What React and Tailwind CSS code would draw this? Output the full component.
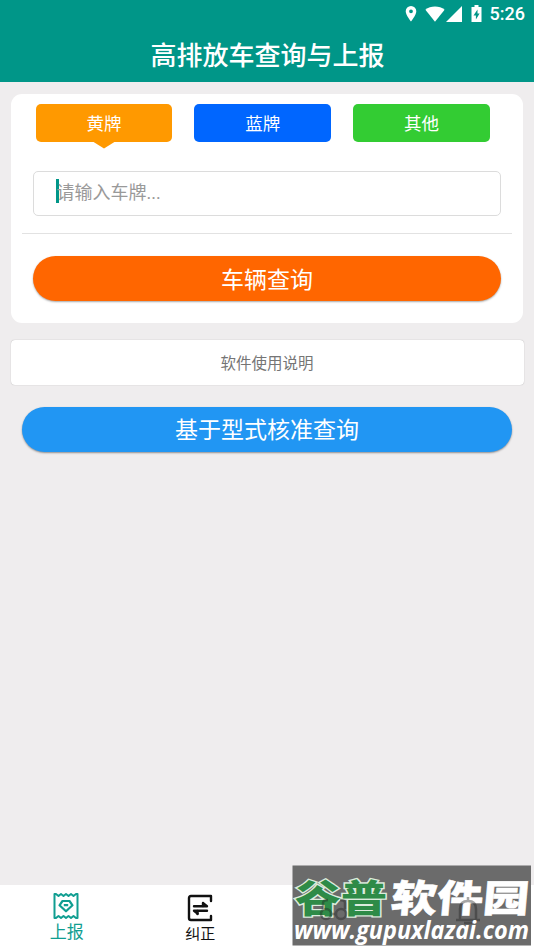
const CJK = "font-['Roboto','Noto_Sans_CJK_SC',sans-serif]";

function StatusBar() {
  return (
    <div className="h-[27px] flex items-center justify-end pr-[9px] text-white">
      <svg width="12" height="17" viewBox="0 0 12 17" fill="currentColor" className="mr-2">
        <path fillRule="evenodd" d="M6 1a5.3 5.3 0 0 0-5.3 5.3C.7 10.300 6 16.500 6 16.500s5.300-6.200 5.300-10.200A5.300 5.300 0 0 0 6 1zm0 3.400a1.900 1.900 0 1 1 0 3.800 1.900 1.900 0 0 1 0-3.800z" />
      </svg>
      <svg width="20" height="16" viewBox="0 0 20 16" fill="currentColor" className="mr-px">
        <path d="M10 15.800.400 3.700C3 1.700 6.300.500 10 .500s7 1.200 9.600 3.200z" />
      </svg>
      <svg width="16" height="16" viewBox="0 0 16 16" fill="currentColor" className="mr-[9px]">
        <path d="M0 16 16 0v16z" />
      </svg>
      <svg width="11" height="17" viewBox="0 0 11 17" fill="currentColor" className="mr-[8px]">
        <path fillRule="evenodd" d="M3.500 0h4v2H10.500v15H.500V2h3zM6.500 4.500 2.500 10.500h2.400v4l3.700-6H6.500z" />
      </svg>
      <span className="text-[18px] leading-[27px] font-medium">5:26</span>
    </div>
  );
}

function Tab({ label, color, active }) {
  return (
    <div className={`relative flex-1 h-[38px] rounded-[5px] text-white text-[17.5px] flex items-center justify-center pt-[2px] ${color}`}>
      {label}
      {active && (
        <svg className="absolute top-[37px] left-[56px]" width="24" height="8" viewBox="0 0 24 8">
          <path d="M0 0h24L12 7.500z" fill="#ff9900" />
        </svg>
      )}
    </div>
  );
}

function NavItem({ label, className, children }) {
  return (
    <div className={`flex-1 flex flex-col items-center ${className}`}>
      {children}
      {label}
    </div>
  );
}

function ReportIcon() {
  return (
    <svg width="26" height="28" viewBox="0 0 26 28" fill="none" stroke="currentColor" strokeWidth="2" strokeLinejoin="round" className="-ml-px">
      <path d="M1.500 2h1.500l2.500 2 2.500-2 2.500 2L13 2l2.500 2 2.500-2 2.500 2 2.500-2h1.500v24h-1.500l-2.500-2-2.500 2-2.500-2-2.500 2-2.500-2-2.500 2-2.500-2-2.500 2h-1.500z" />
      <path strokeWidth="2.200" d="M9.500 9h7l3 4.300-6.500 6-6.500-6zM10.800 13.200h4.400" />
    </svg>
  );
}

function CorrectIcon() {
  return (
    <svg width="26" height="28" viewBox="0 0 26 28" fill="none" stroke="currentColor" strokeWidth="2.400" strokeLinecap="round" strokeLinejoin="round">
      <path d="M24 7V2H4Q2 2 2 4v20q0 2 2 2h20v-4" />
      <path d="M7 12.200h13L16.500 9.500M20 16.800H7l3.500 2.700" />
      <path d="M16 9v3M10.500 17v3" />
    </svg>
  );
}

function Watermark() {
  return (
    <svg className="absolute left-[292px] top-[865px]" width="240" height="81" viewBox="0 0 240 81">
      <rect x="0.500" y="0.500" width="238.500" height="80" fill="#6b6b6b" />
      <g className="font-['Noto_Sans_CJK_SC',sans-serif] font-black" fontSize="42">
        <text transform="translate(3 46.500) scale(1 0.9)" textLength="92" lengthAdjust="spacingAndGlyphs" fill="#2e8b47" stroke="#dcebdd" strokeWidth="3" paintOrder="stroke">谷普</text>
        <text transform="translate(98 46.500) skewX(-5) scale(1 0.9)" textLength="138" lengthAdjust="spacingAndGlyphs" fill="#ffffff" stroke="#ffffff" strokeWidth="0.600">软件园</text>
      </g>
      <g fill="none" stroke="#222222" strokeWidth="2.500" opacity="0.400">
        <circle cx="34" cy="49" r="5" />
        <circle cx="49" cy="49" r="5" />
        <path d="M31 44v-6q0-3 5-3M53 44v-6q0-3-5-3M39 49h5" />
        <path d="M164 55h24M168 54V44q0-8 8-8t8 8v10M176 36v-4M172 58h8" />
      </g>
      <text x="2" y="74" textLength="235" lengthAdjust="spacingAndGlyphs" fill="#ffffff" className="font-['Open_Sans',sans-serif] font-bold italic" fontSize="25">www.gupuxlazai.com</text>
    </svg>
  );
}

export default function App() {
  return (
    <div className={`relative w-[534px] h-[950px] overflow-hidden bg-[#efedee] flex flex-col ${CJK}`}>
      <header className="h-[82px] shrink-0 bg-[#009688] text-white">
        <StatusBar />
        <h1 className="h-[55px] flex items-center justify-center pt-[3px] pl-px text-[26px] font-medium">高排放车查询与上报</h1>
      </header>

      <main className="flex-1">
        <section className="mx-[11px] mt-3 h-[229px] rounded-[11px] bg-white pt-[10px]">
          <div className="flex gap-[22px] ml-[24.500px] mr-[33px]">
            <Tab label="黄牌" color="bg-[#ff9900]" active />
            <Tab label="蓝牌" color="bg-[#0066ff]" />
            <Tab label="其他" color="bg-[#33cc33]" />
          </div>
          <div className="mx-[22px] mt-[29px] h-[45px] rounded-[5px] border border-[#dcdcdc] flex items-start pl-[22px] pt-[7px]">
            <span className="w-[2.500px] h-6 bg-[#009688]" />
            <span className="-ml-[2px] pt-[2px] text-[18px] leading-6 text-[#999999]">请输入车牌...</span>
          </div>
          <div className="mx-[11px] mt-[17px] h-px bg-[#e2e2e2]" />
          <button className="block w-[468px] h-[45px] mx-[22px] mt-[22px] pt-[5px] rounded-full bg-[#ff6600] text-white text-[23px] shadow-[0_1px_2px_rgba(0,0,0,0.35)]">车辆查询</button>
        </section>

        <button className="block w-[513px] h-[45px] ml-[10.500px] mt-[17px] pt-[4px] rounded-[4px] bg-white text-[#757575] text-[15.500px] shadow-[0_0_1px_rgba(0,0,0,0.35)]">软件使用说明</button>
        <button className="block w-[490px] h-[45px] ml-[22px] mt-[21.500px] pt-[5px] rounded-full bg-[#2196f3] text-white text-[23px] shadow-[0_1px_2px_rgba(0,0,0,0.4)]">基于型式核准查询</button>
      </main>

      <nav className="h-[65px] shrink-0 bg-white flex">
        <NavItem label={<span className="text-[17px] leading-[24px]">上报</span>} className="text-[#109e91] pt-[7px]">
          <ReportIcon />
        </NavItem>
        <NavItem label={<span className="text-[15px] leading-[24px]">纠正</span>} className="text-[#111111] pt-[9px]">
          <CorrectIcon />
        </NavItem>
        <div className="flex-[2]" />
      </nav>

      <Watermark />
    </div>
  );
}
